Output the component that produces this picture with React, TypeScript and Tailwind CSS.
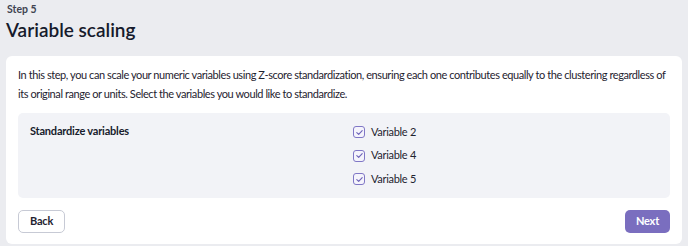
import React from "react";

function Check() {
  return (
    <span className="flex h-[12px] w-[12px] shrink-0 items-center justify-center rounded-[3px] border border-[#8077c6] bg-[#f5f4fc]">
      <svg viewBox="0 0 12 12" className="h-[9px] w-[9px]" fill="none" stroke="#6e63b8" strokeWidth="1.5" strokeLinecap="round" strokeLinejoin="round">
        <path d="M2.4 6.2 L4.9 8.6 L9.6 3.4" />
      </svg>
    </span>
  );
}

export default function App() {
  const vars = ["Variable 2", "Variable 4", "Variable 5"];
  return (
    <div className="min-h-[246px] w-[688px] bg-[#ebecf0] px-[6px] pt-[2px] pb-[3px] font-['Lato',sans-serif] text-[#1f2330]">
      <div className="px-[1px] text-[10.5px] font-bold leading-[14px] text-[#3f4451]">Step 5</div>
      <h1 className="mt-[1px] text-[19px] font-semibold leading-[26px] text-[#161b2c]">Variable scaling</h1>
      <div className="mt-[13px] rounded-[6px] bg-white px-[12px] pt-[9px] pb-[11px]">
        <p className="-mr-[4px] text-[11px] leading-[19px] tracking-[-0.42px] text-[#1f2330]">
          In this step, you can scale your numeric variables using Z-score standardization, ensuring each one contributes equally to the clustering regardless of its original range or units. Select the variables you would like to standardize.
        </p>
        <div className="mt-[10px] flex rounded-[5px] bg-[#f2f3f7] pl-[12px] pr-[12px] pt-[10px] pb-[11px]">
          <div className="w-[323px] text-[11px] font-bold leading-[16px] tracking-[-0.2px] text-[#161b2c]">Standardize variables</div>
          <div className="flex flex-col gap-[7.5px] pt-[1px]">
            {vars.map((v) => (
              <label key={v} className="flex h-[16px] items-center gap-[6px] text-[11px] tracking-[-0.3px] text-[#1f2330]">
                <Check />
                <span>{v}</span>
              </label>
            ))}
          </div>
        </div>
        <div className="mt-[12px] flex items-center justify-between">
          <button className="h-[23px] w-[47px] rounded-[5px] border border-[#c7cad5] bg-white text-[11px] font-bold tracking-[-0.2px] text-[#1f2330]">Back</button>
          <button className="h-[23px] w-[45px] rounded-[5px] bg-[#7a6ebf] text-[11px] font-bold tracking-[-0.2px] text-white">Next</button>
        </div>
      </div>
    </div>
  );
}
